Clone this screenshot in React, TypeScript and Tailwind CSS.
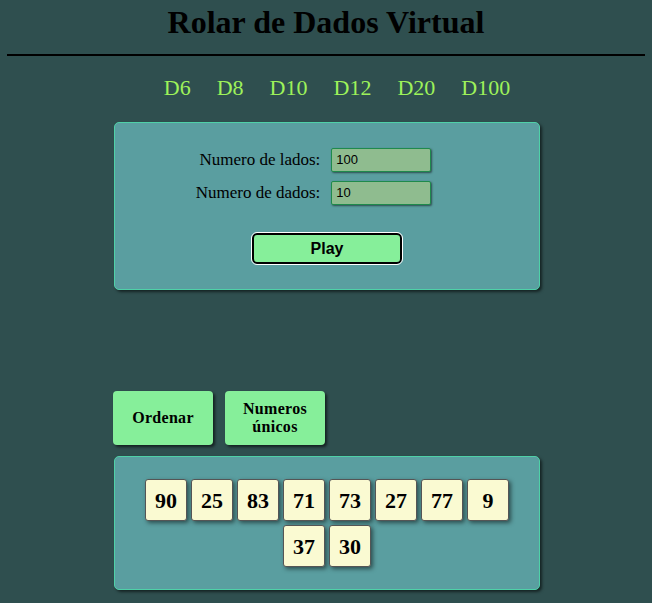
import React from 'react'

const dice = [90, 25, 83, 71, 73, 27, 77, 9, 37, 30]
const tabs = ['D6', 'D8', 'D10', 'D12', 'D20', 'D100']

const serif = "font-['Liberation_Serif','Times_New_Roman',serif]"

const App = () => {
  return (
    <div className={`min-h-[603px] bg-[#2f4f4f] text-black pt-[6px] ${serif}`}>
      <h1 className="text-center text-[32px] font-bold leading-[32px]">Rolar de Dados Virtual</h1>
      <div className="mx-[7px] mt-[16px] h-[2px] bg-black"></div>

      <nav className="mt-[20px] flex justify-center gap-[26px] pl-[22px] text-[22px] leading-[24px] text-[#9ef25a]">
        {tabs.map((t) => (
          <span key={t}>{t}</span>
        ))}
      </nav>

      <div className="mx-[114px] mt-[22px] w-[426px] rounded-[5px] border border-[#4fd1a8] bg-[#5a9ea0] pt-[25px] pb-[25px] shadow-[2px_2px_3px_rgba(0,0,0,0.55)]">
        <div className="flex justify-center pr-[27px]">
          <div className="grid grid-cols-[auto_100px] items-center gap-x-[11px] gap-y-[9px] text-[17px] leading-[24px]">
            <label className="text-right">Numero de lados:</label>
            <div className="h-[24px] rounded-[2px] border border-[#1f8a4c] bg-[#8fbc8f] px-[4px] font-['Liberation_Sans',Arial,sans-serif] text-[13px] leading-[22px] shadow-[1px_1px_2px_rgba(0,0,0,0.5)]">
              100
            </div>
            <label className="text-right">Numero de dados:</label>
            <div className="h-[24px] rounded-[2px] border border-[#1f8a4c] bg-[#8fbc8f] px-[4px] font-['Liberation_Sans',Arial,sans-serif] text-[13px] leading-[22px] shadow-[1px_1px_2px_rgba(0,0,0,0.5)]">
              10
            </div>
          </div>
        </div>
        <div className="mt-[28px] flex justify-center">
          <button className="h-[31px] w-[150px] rounded-[5px] border-2 border-black bg-[#86ef9a] font-['Liberation_Sans',Arial,sans-serif] text-[16px] font-bold outline outline-1 outline-white">
            Play
          </button>
        </div>
      </div>

      <div className="ml-[113px] mt-[101px] flex gap-[12px]">
        <button className="h-[54px] w-[100px] rounded-[4px] bg-[#86ef9a] text-[16px] font-bold tracking-[0.3px] leading-[18px] shadow-[2px_2px_3px_rgba(0,0,0,0.6)]">
          Ordenar
        </button>
        <button className="h-[54px] w-[100px] rounded-[4px] bg-[#86ef9a] text-[16px] font-bold tracking-[0.3px] leading-[18px] shadow-[2px_2px_3px_rgba(0,0,0,0.6)]">
          Numeros
          <br />
          únicos
        </button>
      </div>

      <div className="mx-[114px] mt-[11px] w-[426px] rounded-[5px] border border-[#4fd1a8] bg-[#5a9ea0] px-[24px] py-[22px] shadow-[2px_2px_3px_rgba(0,0,0,0.55)]">
        <div className="flex flex-wrap justify-center gap-[4px]">
          {dice.map((d, i) => (
            <div
              key={i}
              className="flex h-[42px] w-[42px] items-center justify-center rounded-[3px] border border-[#555] bg-[#fafad2] text-[22px] font-bold shadow-[2px_2px_4px_rgba(0,0,0,0.5)]"
            >
              {d}
            </div>
          ))}
        </div>
      </div>
    </div>
  )
}

export default App
